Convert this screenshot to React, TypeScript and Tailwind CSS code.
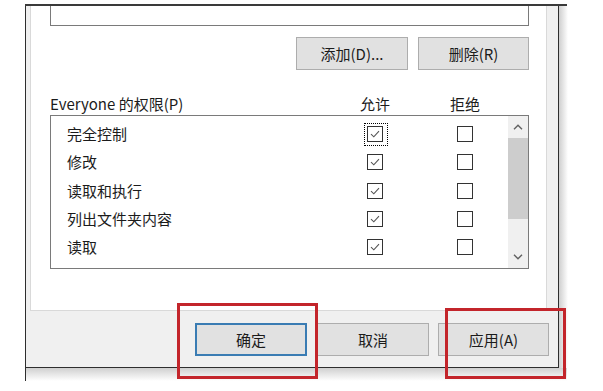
const rows = ["完全控制", "修改", "读取和执行", "列出文件夹内容", "读取", ""];

function CheckBox({ checked, focused }: { checked: boolean; focused?: boolean }) {
  return (
    <div className="relative h-[16px] w-[16px] shrink-0 border border-[#333333] bg-white">
      {checked && (
        <svg viewBox="0 0 14 14" className="absolute inset-0 h-[14px] w-[14px]">
          <path d="M3 7.2 L5.8 9.8 L11 4.2" fill="none" stroke="#555555" strokeWidth="1.1" />
        </svg>
      )}
      {focused && (
        <div className="absolute -top-[4px] -left-[4px] -right-[6px] -bottom-[5px] border border-dotted border-black" />
      )}
    </div>
  );
}

function Chevron({ up }: { up?: boolean }) {
  return (
    <svg viewBox="0 0 10 6" className="h-[6px] w-[10px]">
      <path
        d={up ? "M1 5.2 L5 1.2 L9 5.2" : "M1 0.8 L5 4.8 L9 0.8"}
        fill="none"
        stroke="#606060"
        strokeWidth="1.4"
      />
    </svg>
  );
}

function Button({ label, primary, className }: { label: string; primary?: boolean; className?: string }) {
  return (
    <div
      className={
        "flex h-[33px] items-center justify-center bg-[#e1e1e1] text-[15px] text-[#1b1b1b] " +
        (primary ? "border-2 border-[#3a7cb3] " : "border border-[#adadad] ") +
        (className ?? "")
      }
    >
      {label}
    </div>
  );
}

export default function App() {
  return (
    <div className="relative h-[391px] w-[603px] overflow-hidden bg-white pt-[4px] pl-[25px] font-['Noto_Sans_CJK_SC',sans-serif] leading-[20px]">
      {/* top edge of the window */}
      <div className="h-[2px] w-[542px] bg-[#3a3a3a]" />

      <div className="flex">
        {/* dialog body */}
        <div className="w-[534px] border-x border-b border-[#2e2e2e] bg-[#f0f0f0]">
          {/* tab panel */}
          <div className="ml-[4px] flex h-[305px] w-[517px] flex-col border-x border-b border-[#d9d9d9] bg-white pl-[19px]">
            {/* group list */}
            <div className="h-[20px] w-[479px] border-x border-b border-[#7a7a7a]" />

            {/* add / remove */}
            <div className="mt-[11px] flex w-[479px] justify-end gap-[10px]">
              <Button label="添加(D)..." className="w-[112px]" />
              <Button label="删除(R)" className="w-[111px]" />
            </div>

            {/* header */}
            <div className="flex h-[45px] items-end pb-[1px] text-[15px] text-[#1b1b1b]">
              <div className="w-[305px]">Everyone 的权限(P)</div>
              <div className="w-[40px] text-center">允许</div>
              <div className="w-[50px]" />
              <div className="w-[40px] text-center">拒绝</div>
            </div>

            {/* permissions list */}
            <div className="flex h-[154px] w-[479px] overflow-hidden border border-[#7a7a7a]">
              <div className="flex-1 overflow-hidden pt-[4px]">
                {rows.map((name, i) => (
                  <div key={i} className="flex h-[28.3px] items-center pl-[16px] text-[15px] text-[#1b1b1b]">
                    <div className="w-[300px]">{name}</div>
                    <CheckBox checked focused={i === 0} />
                    <div className="w-[74px]" />
                    <CheckBox checked={false} />
                  </div>
                ))}
              </div>
              {/* scrollbar */}
              <div className="flex w-[20px] flex-col bg-[#f0f0f0]">
                <div className="flex h-[22px] items-center justify-center">
                  <Chevron up />
                </div>
                <div className="h-[81px] bg-[#cdcdcd]" />
                <div className="flex-1" />
                <div className="flex h-[22px] items-center justify-center">
                  <Chevron />
                </div>
              </div>
            </div>
          </div>

          {/* dialog buttons */}
          <div className="flex pt-[12px] pb-[11px] pl-[169px]">
            <Button label="确定" primary className="w-[112px]" />
            <Button label="取消" className="ml-[10px] w-[112px]" />
            <Button label="应用(A)" className="ml-[9px] w-[111px]" />
          </div>
        </div>

        {/* right shadow */}
        <div className="w-[9px] bg-gradient-to-r from-[#cfcfcf] to-white" />
      </div>

      {/* bottom shadow */}
      <div className="h-[13px] w-[542px] border-l border-[#2e2e2e] bg-gradient-to-b from-[#d0d0d0] to-white" />

      {/* red annotation boxes */}
      <div className="absolute top-[303px] left-[177px] h-[76px] w-[141px] border-[3px] border-[#c3252b]" />
      <div className="absolute top-[308px] left-[445px] h-[71px] w-[121px] border-[3px] border-[#c3252b]" />
    </div>
  );
}
